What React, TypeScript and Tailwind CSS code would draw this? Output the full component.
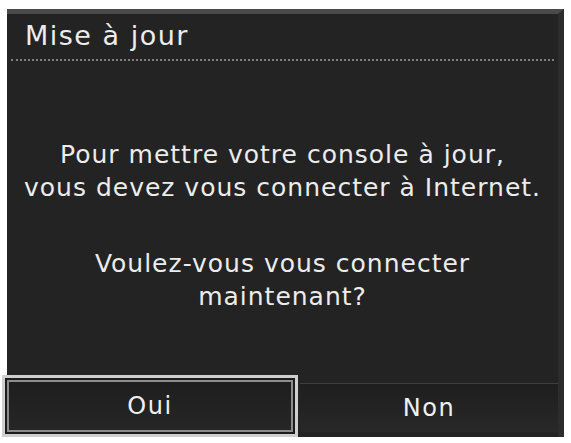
export default function App() {
  const font = { fontFamily: '"DejaVu Sans", "Noto Sans", sans-serif' };
  return (
    <div className="w-[571px] h-[443px] bg-white pt-[9px] overflow-hidden" style={font}>
      {/* dialog panel */}
      <div className="ml-[7px] w-[557px] h-[366px] bg-[#232323] border-t-[5px] border-[#4a4a4a] border-r-[6px] border-r-[#2c2c2c] flex flex-col">
        <div className="h-[47px] mx-[4px] border-b-2 border-dotted border-[#808080] flex items-center pl-[14px]">
          <span className="text-[27px] text-[#ececec] tracking-[1.5px]">Mise à jour</span>
        </div>
        <div className="flex-1 flex flex-col items-center pt-[77px] text-[25px] leading-[33px] text-[#ececec] text-center tracking-[1px]">
          <p>
            Pour mettre votre console à jour,
            <br />
            vous devez vous connecter à Internet.
          </p>
          <p className="mt-[43px]">
            Voulez-vous vous connecter
            <br />
            maintenant?
          </p>
        </div>
      </div>

      {/* buttons */}
      <div className="ml-[7px] w-[557px] h-[62px] bg-[#232323] flex border-r-[6px] border-r-[#2c2c2c]">
        <div className="-ml-[5px] w-[296px] h-[62px] border-[3px] border-[#cfcfcf] p-[2px] bg-[#1c1c1c]">
          <div className="h-full border-2 border-[#8c8c8c] bg-gradient-to-b from-[#1e1e1e] to-[#262626] flex items-center justify-center">
            <span className="text-[24px] text-[#f0f0f0] tracking-[1.5px]">Oui</span>
          </div>
        </div>
        <div className="flex-1 ml-[2px] mt-[8px] h-[49px] border-t border-[#3e3e3e] bg-gradient-to-b from-[#1e1e1e] to-[#282828] flex items-center justify-center">
          <span className="text-[24px] text-[#f0f0f0] tracking-[1.5px]">Non</span>
        </div>
      </div>
    </div>
  );
}
